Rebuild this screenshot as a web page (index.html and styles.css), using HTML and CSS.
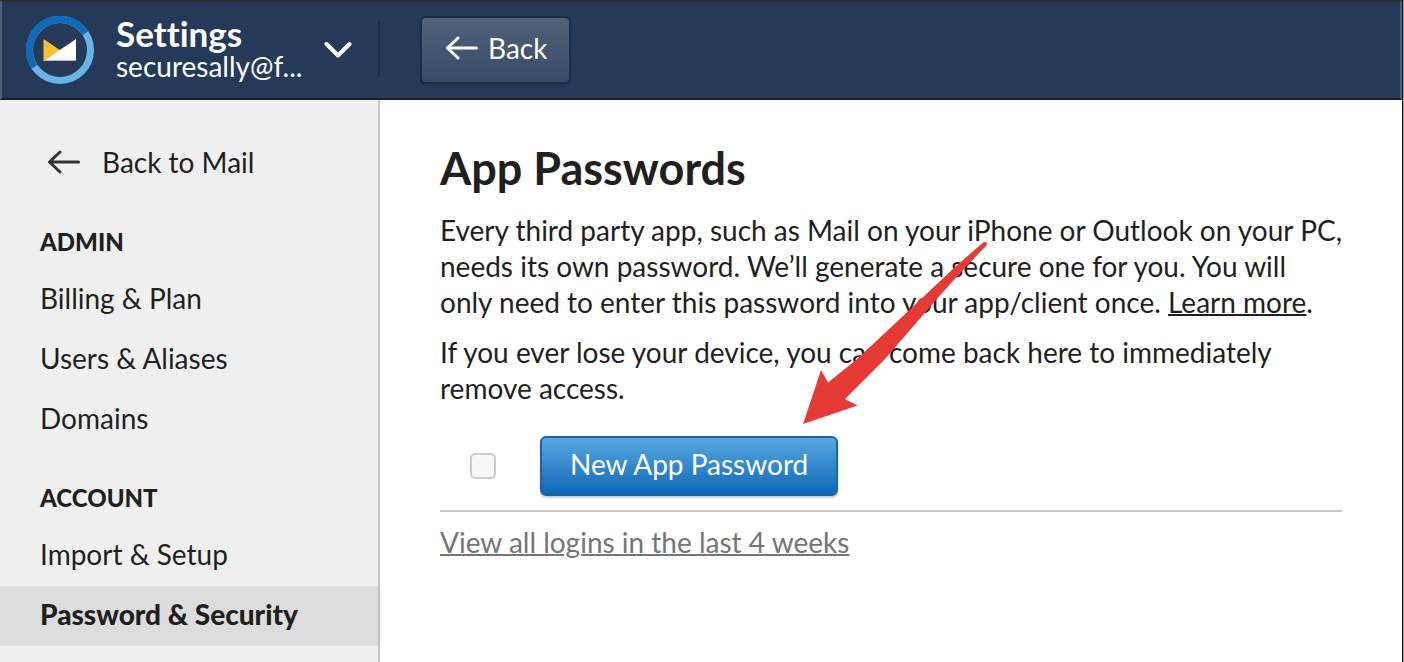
FILE: index.html
```html
<!DOCTYPE html>
<html lang="en">
<head>
<meta charset="utf-8">
<meta name="viewport" content="width=device-width, initial-scale=1">
<title>App Passwords</title>
<link rel="stylesheet" href="styles.css">
</head>
<body>
<div class="app">
  <header class="topbar">
    <button class="account" type="button">
      <svg class="logo" viewBox="0 0 68 68" aria-hidden="true">
        <circle cx="34" cy="34" r="30.5" fill="none" stroke="#69b3e7" stroke-width="7"/>
        <path d="M8.5 50.9A30.5 30.5 0 1 1 59.4 17.1" fill="none" stroke="#0f6ab8" stroke-width="7"/>
        <path d="M17.5 23v22L34 34.200z" fill="#ffc02f"/>
        <path d="M50 23v22H17.500z" fill="#fff"/>
        <path d="M17.500 44.500H50" stroke="#b0bccd"/>
      </svg>
      <span class="account-text">
        <span class="account-title">Settings</span>
        <span class="account-mail">securesally@f...</span>
      </span>
      <svg class="chevron" viewBox="0 0 28 18" aria-hidden="true"><path d="M2.500 3L14 14.500 25.500 3" fill="none" stroke="#fff" stroke-width="4" stroke-linecap="round" stroke-linejoin="round"/></svg>
    </button>
    <button class="back-button" type="button">
      <svg class="arrow" viewBox="0 0 32 24" aria-hidden="true"><path d="M12 2L1.500 12 12 22M2 12H30.500" fill="none" stroke="currentColor" stroke-width="3" stroke-linecap="round" stroke-linejoin="round"/></svg>
      Back
    </button>
  </header>
  <div class="body">
    <nav class="sidebar">
      <a class="nav-item nav-back" href="#mail">
        <svg class="arrow" viewBox="0 0 32 24" aria-hidden="true"><path d="M12 2L1.500 12 12 22M2 12H30.500" fill="none" stroke="currentColor" stroke-width="3" stroke-linecap="round" stroke-linejoin="round"/></svg>
        Back to Mail
      </a>
      <h2 class="nav-heading">ADMIN</h2>
      <a class="nav-item" href="#billing">Billing &amp; Plan</a>
      <a class="nav-item" href="#users">Users &amp; Aliases</a>
      <a class="nav-item" href="#domains">Domains</a>
      <h2 class="nav-heading">ACCOUNT</h2>
      <a class="nav-item" href="#import">Import &amp; Setup</a>
      <a class="nav-item nav-current" href="#security" aria-current="page">Password &amp; Security</a>
    </nav>
    <main class="content">
      <h1 class="title">App Passwords</h1>
      <p class="text">Every third party app, such as Mail on your iPhone or Outlook on your PC,<br>needs its own password. We’ll generate a secure one for you. You will<br>only need to enter this password into your app/client once. <a class="link" href="#learn">Learn more</a>.</p>
      <p class="text">If you ever lose your device, you can come back here to immediately<br>remove access.</p>
      <div class="actions">
        <input class="tick" type="checkbox" aria-label="Select all passwords">
        <button class="primary" type="button">New App Password</button>
      </div>
      <a class="logins" href="#logins">View all logins in the last 4 weeks</a>
      <svg class="pointer" viewBox="0 0 186 184" aria-hidden="true"><path d="M181.500 1.200Q186 0 184.500 4.500Q162 27 134 59L83 118 43 158 55.500 164.500 1 183 19 129 26 141.500 54 119 101 75 153 26z" fill="#e53a35"/></svg>
    </main>
  </div>
</div>
</body>
</html>
```
FILE: styles.css
```css
* { box-sizing: border-box; }
body {
  margin: 0;
  font-family: Lato, "Open Sans", sans-serif;
  font-size: 28px;
  line-height: 36px;
  font-variant-ligatures: none;
  color: #1f1f1f;
  background: #fff;
}
a { color: inherit; }
button { font: inherit; font-variant-ligatures: none; color: #fff; cursor: pointer; }
.app {
  min-height: 100vh;
  display: flex;
  flex-direction: column;
  border-right: 1px solid #111;
  margin-right: 1px;
  box-shadow: 1px 0 #a3a3a3;
}
.topbar {
  height: 100px;
  flex: none;
  display: flex;
  align-items: center;
  gap: 40px;
  background: #253a59;
  border: 2px solid #506077;
  border-top-color: #2b2b2b;
  border-bottom-color: #212121;
}
.account {
  width: 378px;
  height: 56px;
  display: flex;
  align-items: center;
  padding: 0 26px 0 24px;
  background: none;
  border: 0;
  border-right: 2px solid #1d304b;
  text-align: left;
}
.logo { width: 68px; height: 68px; flex: none; }
.account-text { display: flex; flex-direction: column; flex: 1; margin-left: 22px; padding-bottom: 2px; }
.account-title { font-size: 35px; line-height: 34px; font-weight: 700; }
.account-mail { line-height: 32px; }
.chevron { width: 28px; height: 18px; flex: none; }
.arrow { width: 32px; height: 24px; flex: none; }
.back-button {
  height: 68px;
  display: flex;
  align-items: center;
  gap: 10px;
  padding: 0 22px 4px 24px;
  border: 2px solid #1c2d47;
  border-radius: 6px;
  background: linear-gradient(#52617a, #364a68);
  box-shadow: 0 1px 2px #1c2d47;
}
.body { flex: 1; display: flex; }
.sidebar {
  width: 380px;
  flex: none;
  padding-top: 34px;
  background: #f0f0f0;
  border-right: 2px solid #c4c4c4;
}
.nav-item {
  display: flex;
  align-items: center;
  height: 60px;
  padding: 0 40px 4px;
  text-decoration: none;
}
.nav-back { gap: 22px; padding-left: 48px; }
.nav-back .arrow { color: #333; }
.nav-heading {
  margin: 28px 0 8px;
  padding: 0 40px;
  font-size: 24px;
  line-height: 40px;
  font-weight: 900;
}
.nav-current { background: #ddd; font-weight: 900; }
.content {
  position: relative;
  flex: 1;
  padding: 42px 60px 40px;
}
.title { margin: 0 0 18px; font-size: 45px; line-height: 52px; font-weight: 700; }
.text { margin: 0 -16px 14px 0; }
.link { text-decoration-thickness: 2px; }
.actions {
  display: flex;
  align-items: center;
  gap: 44px;
  margin-top: 30px;
  padding: 0 30px 14px;
  border-bottom: 2px solid #c4c4c4;
}
.tick {
  appearance: none;
  width: 26px;
  height: 26px;
  margin: 0;
  border: 2px solid #ccc;
  border-radius: 5px;
  background: #f8f8f8;
}
.primary {
  height: 60px;
  padding: 0 28px 4px;
  border: 2px solid #1b65a6;
  border-radius: 6px;
  background: linear-gradient(#58a8e1, #0f68b7);
  box-shadow: 0 2px 2px #ccc;
}
.logins {
  display: inline-block;
  margin-top: 12px;
  color: #757575;
  text-decoration-thickness: 2px;
}
.pointer {
  position: absolute;
  left: 422px;
  top: 141px;
  width: 186px;
  height: 184px;
  pointer-events: none;
}
```
